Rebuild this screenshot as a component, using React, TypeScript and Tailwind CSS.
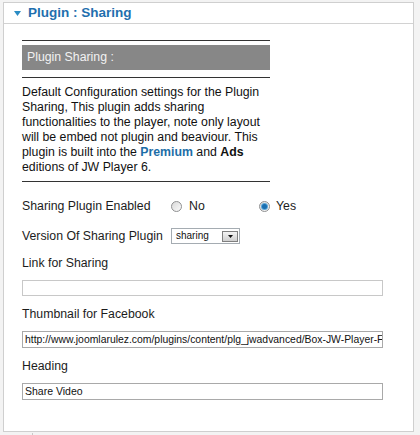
import React from 'react';

const Radio: React.FC<{ checked?: boolean }> = ({ checked }) => (
  <span className="relative inline-flex h-[11px] w-[11px] items-center justify-center rounded-full border border-[#8f9091] bg-gradient-to-br from-[#d9d9d9] to-[#fbfbfb]">
    {checked && (
      <span className="h-[5px] w-[5px] rounded-full bg-[#1b6fb0] shadow-[0_0_0_1px_#5aa6d8]" />
    )}
  </span>
);

const Label: React.FC<{ children: React.ReactNode }> = ({ children }) => (
  <div className="h-[16px] leading-[16px] text-[12.3px] text-[#1c1c1c]">{children}</div>
);

const TextBox: React.FC<{ value?: string; light?: boolean; className?: string }> = ({
  value,
  light,
  className,
}) => (
  <div
    className={`w-[361px] overflow-hidden whitespace-nowrap border bg-white pl-[2px] leading-[15px] text-[#111] ${
      light ? 'border-[#c8c8c8]' : 'border-[#a9a9a9]'
    } ${className ?? ''}`}
  >
    {value}
  </div>
);

export default function App() {
  return (
    <div className="h-[435px] w-[420px] overflow-hidden bg-[#f3f3f3] pl-[3px] pt-[2px] font-['Liberation_Sans',Arial,sans-serif]">
      <div className="h-[430px] w-[411px] border border-[#cfcfcf] bg-white">
        {/* header */}
        <div className="flex h-[21px] items-center border-b border-[#d2d2d2]">
          <svg className="ml-[10px]" width="7" height="5" viewBox="0 0 7 5">
            <polygon points="0,0 7,0 3.5,5" fill="#2a8cc4" />
          </svg>
          <span className="ml-[7px] text-[13.5px] font-bold leading-[20px] text-[#1f6fae]">
            Plugin : Sharing
          </span>
        </div>

        <div className="pl-[18px]">
          <div className="w-[248px]">
            <div className="mt-[16px] h-px bg-[#333]" />
            <div className="mt-[4px] flex h-[25px] items-center bg-[#878787] pl-[5px] text-[12.3px] text-[#f2f2f2]">
              Plugin Sharing :
            </div>
            <div className="mt-[7px] h-px bg-[#333]" />
            <p className="mt-[7px] text-[12.3px] leading-[15px] text-[#111]">
              Default Configuration settings for the Plugin Sharing, This plugin adds sharing
              functionalities to the player, note only layout will be embed not plugin and
              beaviour. This plugin is built into the{' '}
              <span className="font-bold text-[#1d6ea7]">Premium</span> and{' '}
              <span className="font-bold">Ads</span> editions of JW Player 6.
            </p>
            <div className="mt-[6px] h-px bg-[#333]" />
          </div>

          <div className="mt-[14px] flex h-[20px] items-center text-[12.3px] text-[#1c1c1c]">
            <span className="w-[149px]">Sharing Plugin Enabled</span>
            <div className="flex w-[88px] items-center gap-[7px]">
              <Radio />
              <span>No</span>
            </div>
            <div className="flex items-center gap-[6px]">
              <Radio checked />
              <span>Yes</span>
            </div>
          </div>

          <div className="mt-[12px] flex h-[16px] items-center text-[12.3px] text-[#1c1c1c]">
            <span className="w-[149px]">Version Of Sharing Plugin</span>
            <div className="flex h-[16px] w-[69px] items-center justify-between border border-[#a5acb2] bg-white pl-[4px] pr-[1px]">
              <span className="text-[10px] leading-[14px] text-[#111]">sharing</span>
              <span className="flex h-[11px] w-[16px] items-center justify-center border border-[#7f7f7f] bg-gradient-to-b from-[#f4f4f4] to-[#cfcfcf]">
                <svg width="5" height="3" viewBox="0 0 5 3">
                  <polygon points="0,0 5,0 2.5,3" fill="#111" />
                </svg>
              </span>
            </div>
          </div>

          <div className="mt-[11px]">
            <Label>Link for Sharing</Label>
          </div>
          <TextBox light className="mt-[9px] h-[16px]" />

          <div className="mt-[10px]">
            <Label>Thumbnail for Facebook</Label>
          </div>
          <TextBox
            className="mt-[9px] h-[17px] text-[10.4px]"
            value="http://www.joomlarulez.com/plugins/content/plg_jwadvanced/Box-JW-Player-Free-Standard-Edition.jpg"
          />

          <div className="mt-[10px]">
            <Label>Heading</Label>
          </div>
          <TextBox className="mt-[9px] h-[17px] text-[10.5px]" value="Share Video" />
        </div>
      </div>
      <div className="ml-[29px] mt-[1px] h-[3px] w-px bg-[#c9c9c9]" />
    </div>
  );
}
